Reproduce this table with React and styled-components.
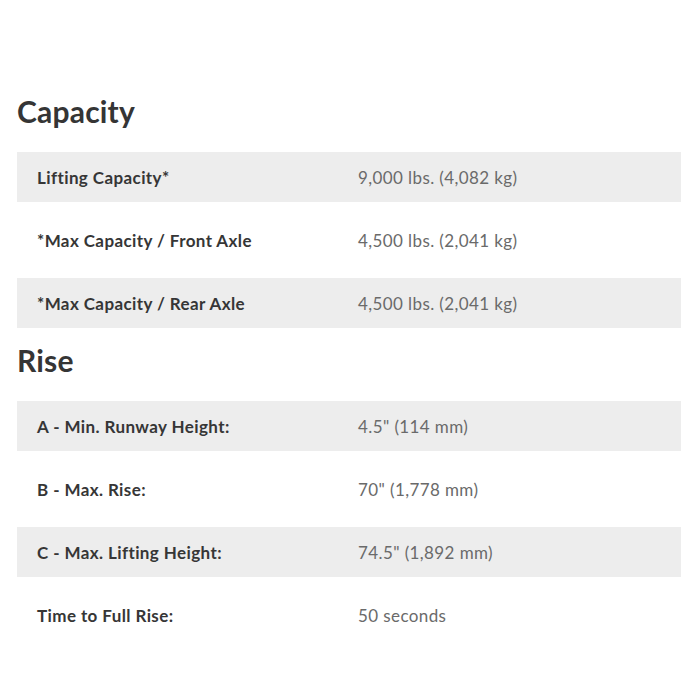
import React from "react";
import styled, { createGlobalStyle } from "styled-components";

const Global = createGlobalStyle`
  html, body { margin: 0; padding: 0; background: #ffffff; }
  body { font-family: Lato, "Open Sans", sans-serif; }
`;

const Page = styled.div`
  width: 700px;
  box-sizing: border-box;
  padding: 93px 19px 40px 17px;
  display: flex;
  flex-direction: column;
`;

const Section = styled.section`
  display: flex;
  flex-direction: column;
  & + & { margin-top: 14px; }
`;

const Heading = styled.h2`
  margin: 0 0 23px 0;
  font-family: Lato, sans-serif;
  font-weight: 700;
  font-size: 30px;
  letter-spacing: 0.2px;
  line-height: 36px;
  color: #353535;
`;

const Rows = styled.div`
  display: flex;
  flex-direction: column;
  gap: 13px;
`;

const Row = styled.div`
  display: grid;
  grid-template-columns: 321px 1fr;
  align-items: center;
  height: 50px;
  padding-left: 20px;
  background: ${(p) => (p.$shaded ? "#ededed" : "transparent")};
`;

const Label = styled.div`
  font-weight: 700;
  font-size: 17px;
  letter-spacing: 0.4px;
  color: #363636;
`;

const Value = styled.div`
  font-weight: 400;
  font-size: 17px;
  letter-spacing: 0.4px;
  color: #6a6a6a;
`;

const data = [
  {
    title: "Capacity",
    rows: [
      ["Lifting Capacity*", "9,000 lbs. (4,082 kg)"],
      ["*Max Capacity / Front Axle", "4,500 lbs. (2,041 kg)"],
      ["*Max Capacity / Rear Axle", "4,500 lbs. (2,041 kg)"],
    ],
  },
  {
    title: "Rise",
    rows: [
      ["A - Min. Runway Height:", "4.5\" (114 mm)"],
      ["B - Max. Rise:", "70\" (1,778 mm)"],
      ["C - Max. Lifting Height:", "74.5\" (1,892 mm)"],
      ["Time to Full Rise:", "50 seconds"],
    ],
  },
];

export default function App() {
  return (
    <>
      <Global />
      <Page>
        {data.map((s) => (
          <Section key={s.title}>
            <Heading>{s.title}</Heading>
            <Rows>
              {s.rows.map(([l, v], i) => (
                <Row key={l} $shaded={i % 2 === 0}>
                  <Label>{l}</Label>
                  <Value>{v}</Value>
                </Row>
              ))}
            </Rows>
          </Section>
        ))}
      </Page>
    </>
  );
}
